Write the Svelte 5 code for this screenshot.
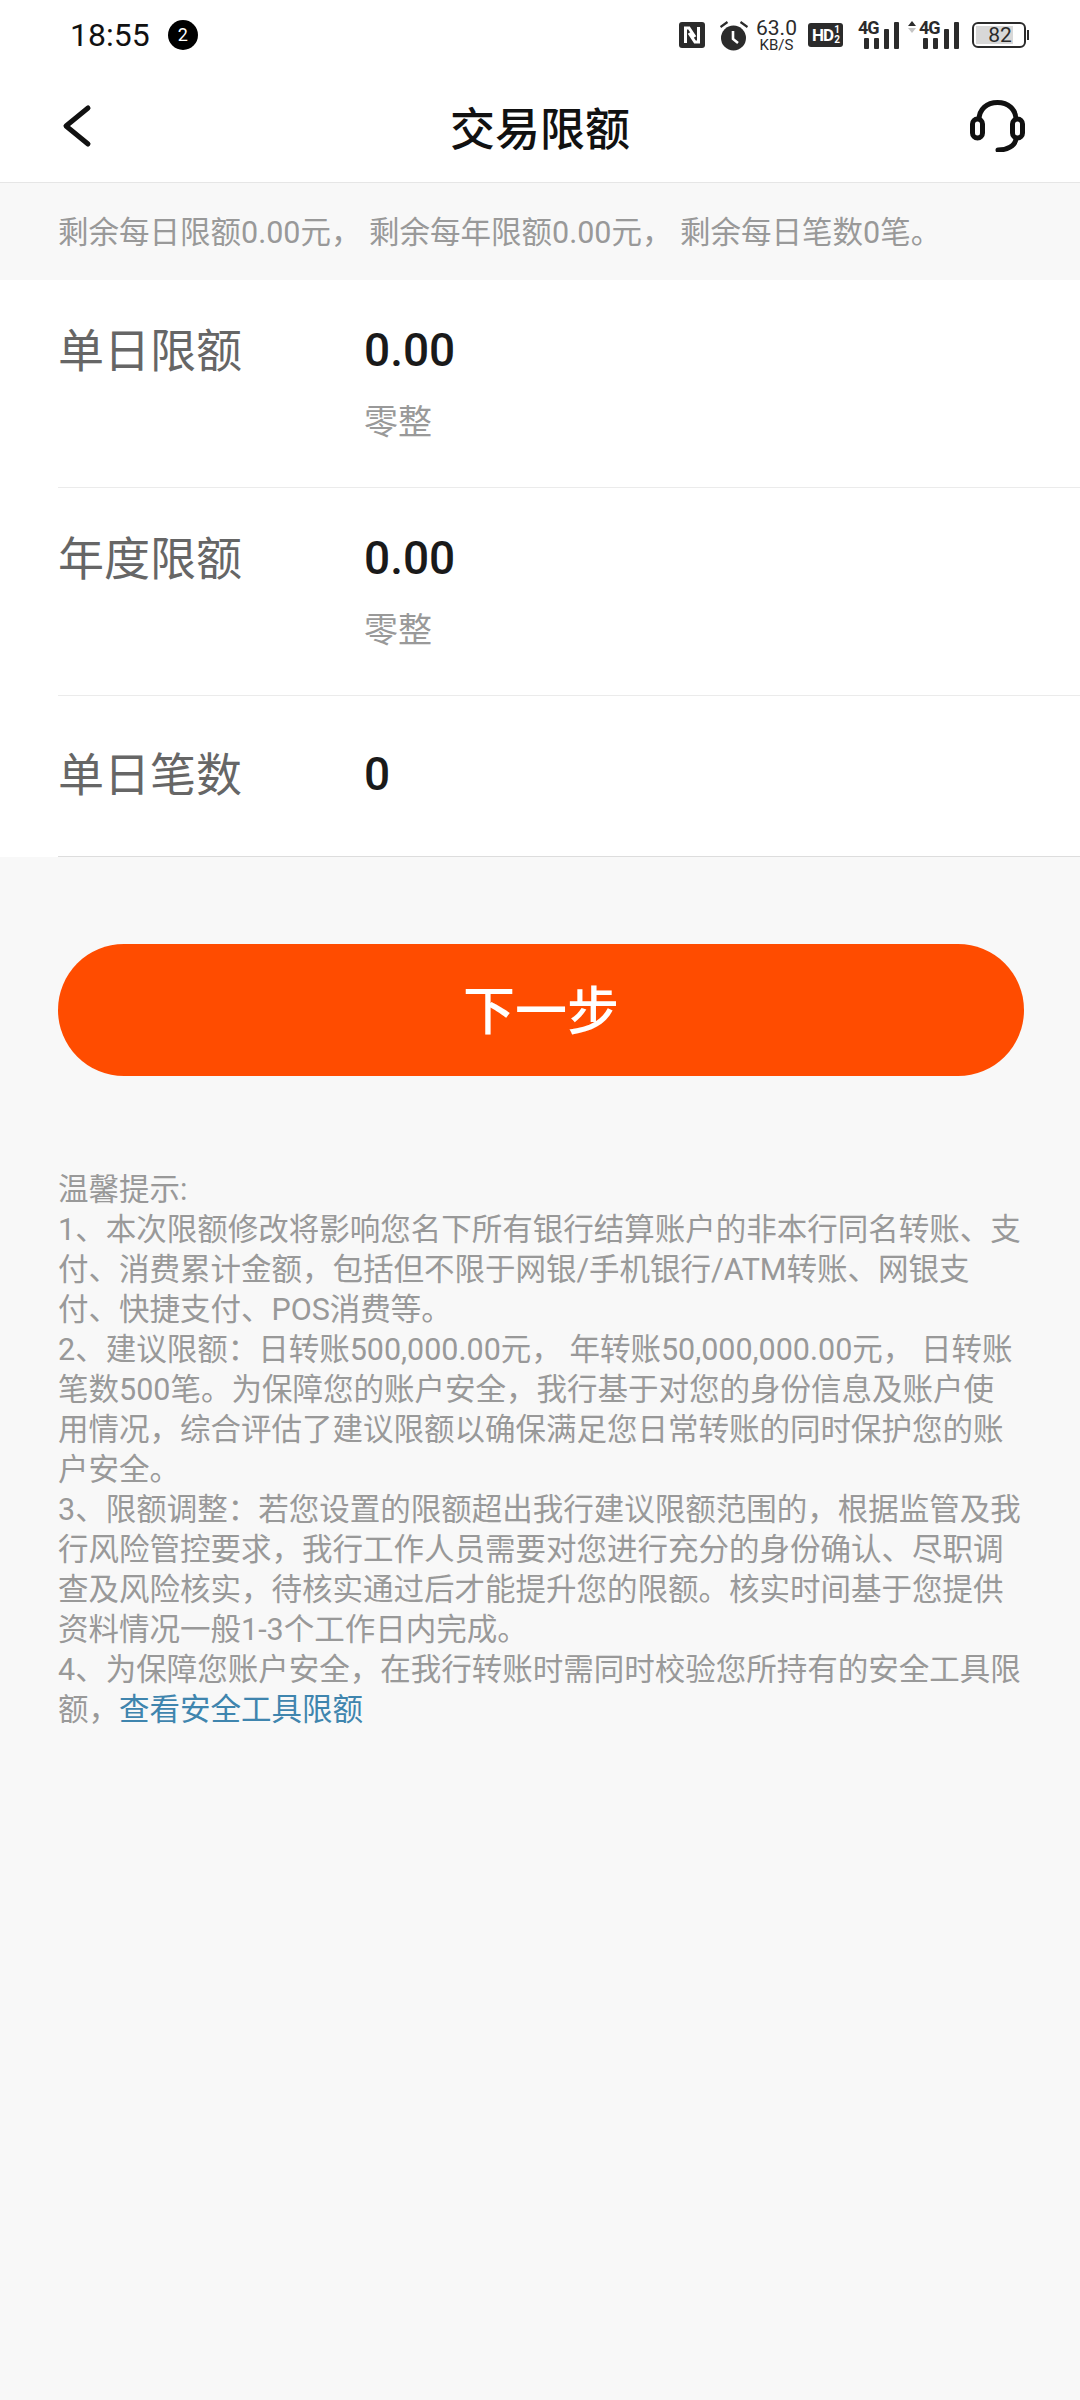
<script>
	const rows = [
		{ label: "单日限额", value: "0.00", sub: "零整" },
		{ label: "年度限额", value: "0.00", sub: "零整" },
		{ label: "单日笔数", value: "0" }
	];
	const tips = [
		"温馨提示:",
		"1、本次限额修改将影响您名下所有银行结算账户的非本行同名转账、支",
		"付、消费累计金额，包括但不限于网银/手机银行/ATM转账、网银支",
		"付、快捷支付、POS消费等。",
		"2、建议限额：日转账500,000.00元， 年转账50,000,000.00元， 日转账",
		"笔数500笔。为保障您的账户安全，我行基于对您的身份信息及账户使",
		"用情况，综合评估了建议限额以确保满足您日常转账的同时保护您的账",
		"户安全。",
		"3、限额调整：若您设置的限额超出我行建议限额范围的，根据监管及我",
		"行风险管控要求，我行工作人员需要对您进行充分的身份确认、尽职调",
		"查及风险核实，待核实通过后才能提升您的限额。核实时间基于您提供",
		"资料情况一般1-3个工作日内完成。",
		"4、为保障您账户安全，在我行转账时需同时校验您所持有的安全工具限"
	];
</script>

<div class="page">
	<div class="status">
		<span class="time">18:55</span>
		<span class="badge">2</span>
		<div class="status-icons">
			<svg class="nfc" viewBox="0 0 26 26" width="26" height="26">
				<rect width="26" height="26" rx="3" fill="#2b2b2b" />
				<path d="M6.5 21V6h3.5l6 9M19.5 5v15h-3.5l-6-9" fill="none" stroke="#fff" stroke-width="3" />
			</svg>
			<svg class="alarm" viewBox="0 0 28 31" width="28" height="31">
				<circle cx="13.5" cy="18" r="12.5" fill="#2b2b2b" />
				<path d="M13 11v8l5 4" fill="none" stroke="#fff" stroke-width="2.6" />
				<path d="M.5 7l7-5M27.5 7l-7-5" stroke="#2b2b2b" stroke-width="2.2" />
			</svg>
			<div class="speed"><span>63.0</span><span class="unit">KB/S</span></div>
			<div class="hd">HD<span class="frac"><i>1</i><i>2</i></span></div>
			<div class="signal">
				<span class="net">4G</span>
				<svg class="bars" viewBox="0 0 35 27" width="35" height="27">
					<rect x="0" y="16" width="5" height="11" rx="1" /><rect x="10" y="16" width="5" height="11" rx="1" />
					<rect x="20" y="7" width="5" height="20" rx="1" /><rect x="30" y="0" width="5" height="27" rx="1" />
				</svg>
			</div>
			<div class="signal second">
				<svg class="arrows" viewBox="0 0 8 12" width="8" height="12">
					<path d="M4 0l4 5H0z" fill="#2b2b2b" /><path d="M4 12l4-5H0z" fill="#c4c4c4" />
				</svg>
				<span class="net">4G</span>
				<svg class="bars" viewBox="0 0 36 27" width="36" height="27">
					<rect x="0" y="16" width="5" height="11" rx="1" /><rect x="10" y="16" width="5" height="11" rx="1" />
					<rect x="21" y="7" width="5" height="20" rx="1" /><rect x="31" y="0" width="5" height="27" rx="1" />
				</svg>
			</div>
			<div class="battery">
				<div class="cell"><span class="fill"></span><span class="level">82</span></div>
				<span class="nub"></span>
			</div>
		</div>
	</div>

	<header>
		<svg class="back" viewBox="0 0 32 46" width="32" height="46">
			<path d="M28 5L6 23l22 18" fill="none" stroke="#111" stroke-width="5" stroke-linecap="round" stroke-linejoin="round" />
		</svg>
		<h1>交易限额</h1>
		<svg class="service" viewBox="0 0 55 52" width="55" height="52">
			<path d="M9 20C9 9 17 2.5 27.5 2.5S46 9 46 20" fill="none" stroke="#111" stroke-width="5" />
			<rect x="2.5" y="19" width="10" height="19" rx="5" fill="none" stroke="#111" stroke-width="5" />
			<rect x="42.5" y="19" width="10" height="19" rx="5" fill="none" stroke="#111" stroke-width="5" />
			<path d="M46 39c-1 7-9 11-18 11" fill="none" stroke="#111" stroke-width="5" stroke-linecap="round" />
		</svg>
	</header>

	<p class="notice">剩余每日限额0.00元， 剩余每年限额0.00元， 剩余每日笔数0笔。</p>

	<section class="limits">
		{#each rows as row}
			<div class="row" class:single={!row.sub}>
				<span class="label">{row.label}</span>
				<div class="amount">
					<span class="value">{row.value}</span>
					{#if row.sub}<span class="sub">{row.sub}</span>{/if}
				</div>
			</div>
		{/each}
	</section>

	<button type="button" class="next">下一步</button>

	<div class="tips">
		{#each tips as line}
			<div>{line}</div>
		{/each}
		<div>额，<span class="link">查看安全工具限额</span></div>
	</div>
</div>

<style>
	:global(body) {
		margin: 0;
		background: #f8f8f8;
	}
	.page {
		height: 2400px;
		background: #f8f8f8;
		font-family: Roboto, "Noto Sans CJK SC", sans-serif;
		overflow: hidden;
	}

	.status {
		display: flex;
		align-items: center;
		height: 70px;
		padding: 0 51px 0 70px;
		background: #fff;
		color: #111;
	}
	.time {
		font-size: 32px;
		line-height: 72px;
	}
	.badge {
		width: 30px;
		height: 30px;
		margin-left: 18px;
		border-radius: 50%;
		background: #000;
		color: #fff;
		font-size: 18px;
		line-height: 30px;
		text-align: center;
	}
	.status-icons {
		display: flex;
		align-items: center;
		margin-left: auto;
		color: #2b2b2b;
	}
	.alarm {
		margin-left: 15px;
	}
	.speed {
		display: flex;
		flex-direction: column;
		align-items: center;
		width: 41px;
		margin-left: 8px;
		font-size: 21px;
		line-height: 19px;
	}
	.speed .unit {
		margin-top: 1px;
		font-size: 15px;
		line-height: 13px;
	}
	.hd {
		display: flex;
		align-items: center;
		justify-content: center;
		gap: 1px;
		width: 35px;
		height: 24px;
		margin-left: 11px;
		border-radius: 3px;
		background: #2b2b2b;
		color: #fff;
		font-size: 17px;
		font-weight: 700;
		letter-spacing: -1px;
	}
	.frac {
		display: flex;
		flex-direction: column;
		font-size: 10px;
		line-height: 10px;
	}
	.frac i {
		font-style: normal;
	}
	.signal {
		position: relative;
		display: flex;
		justify-content: flex-end;
		align-items: flex-end;
		width: 41px;
		height: 28px;
		margin-left: 15px;
	}
	.signal.second {
		width: 51px;
		margin-left: 9px;
	}
	.bars rect {
		fill: #2b2b2b;
	}
	.signal .net {
		position: absolute;
		top: -2px;
		left: 0;
		font-size: 18px;
		line-height: 18px;
		font-weight: 700;
		letter-spacing: -1px;
	}
	.signal.second .net {
		left: 11px;
	}
	.signal .arrows {
		position: absolute;
		left: 0;
		top: 0;
	}
	.battery {
		display: flex;
		align-items: center;
		gap: 1px;
		margin-left: 13px;
	}
	.cell {
		position: relative;
		box-sizing: border-box;
		width: 54px;
		height: 26px;
		border: 2px solid #2b2b2b;
		border-radius: 6px;
		padding-left: 2px;
		text-align: center;
		font-size: 21px;
		line-height: 22px;
	}
	.fill {
		position: absolute;
		left: 2px;
		top: 2px;
		bottom: 2px;
		width: 37px;
		background: #d8d8d8;
	}
	.level {
		position: relative;
	}
	.nub {
		width: 2px;
		height: 10px;
		background: #2b2b2b;
	}

	header {
		display: grid;
		grid-template-columns: 1fr auto 1fr;
		align-items: center;
		height: 112px;
		padding: 0 60px;
		background: #fff;
		border-bottom: 1px solid #e6e6e6;
	}
	.service {
		justify-self: end;
		margin-right: -5px;
	}
	h1 {
		margin: 0;
		font-size: 45px;
		font-weight: 500;
		color: #111;
	}

	.notice {
		margin: 0;
		padding: 2px 58px 0;
		font-size: 30.5px;
		line-height: 95px;
		color: #999;
		white-space: nowrap;
	}

	.limits {
		background: #fff;
		padding-left: 58px;
	}
	.row {
		display: flex;
		height: 208px;
		box-sizing: border-box;
		padding-top: 40px;
		border-bottom: 1px solid #ebebeb;
	}
	.row.single {
		height: 161px;
		padding-top: 48px;
		border-bottom-color: #ddd;
	}
	.label {
		width: 306px;
		font-size: 46px;
		line-height: 62px;
		color: #666;
	}
	.amount {
		display: flex;
		flex-direction: column;
	}
	.value {
		font-size: 46px;
		font-weight: 500;
		line-height: 60px;
		color: #1a1a1a;
	}
	.sub {
		margin-top: 19px;
		font-size: 34px;
		line-height: 46px;
		color: #999;
	}

	.next {
		display: block;
		width: 966px;
		height: 132px;
		margin: 87px 0 0 58px;
		padding: 0 0 6px;
		border: none;
		border-radius: 66px;
		background: #ff4c00;
		color: #fff;
		font-family: inherit;
		font-size: 52px;
		font-weight: 500;
	}

	.tips {
		margin: 94px 0 0 58px;
		font-size: 30.5px;
		line-height: 40px;
		color: #999;
		white-space: nowrap;
	}
	.link {
		color: #3f85ae;
	}
</style>
